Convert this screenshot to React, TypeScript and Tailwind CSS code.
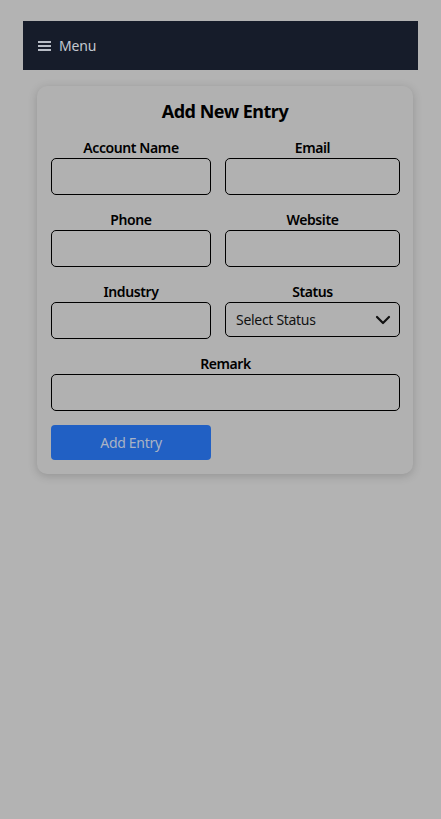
import { useState } from 'react'

const FONT = { fontFamily: '"Noto Sans", "Open Sans", sans-serif' }

function Field({ label, className = '' }: { label: string; className?: string }) {
  return (
    <div className={`flex flex-col ${className}`}>
      <label className="h-5 text-center text-[14px] font-semibold leading-5 tracking-[-0.4px] text-black">{label}</label>
      <input className="h-[37px] w-full rounded-[5px] border border-black bg-transparent px-2 text-[14px] outline-none" />
    </div>
  )
}

export default function App() {
  const [status, setStatus] = useState('')

  return (
    <div className="min-h-screen bg-[#b3b3b3] pt-[21px]" style={FONT}>
      {/* Nav */}
      <div className="mx-[23px] flex h-[49px] items-center gap-2 bg-[#161c2a] px-[15px] text-[14px] tracking-[-0.2px] text-[#c3c8d0]">
        <svg width="13" height="12" viewBox="0 0 13 12" className="text-[#b8bdc6]">
          <rect x="0" y="1" width="13" height="2" fill="currentColor" />
          <rect x="0" y="5" width="13" height="2" fill="currentColor" />
          <rect x="0" y="9" width="13" height="2" fill="currentColor" />
        </svg>
        <span>Menu</span>
      </div>

      {/* Card */}
      <div className="mx-[37px] mt-[16px] w-[376px] rounded-[10px] bg-[#b1b1b1] px-[14px] pb-[14px] pt-[11px] shadow-[0_2px_10px_rgba(0,0,0,0.18)]">
        <h2 className="text-center text-[18px] font-bold leading-7 tracking-[-0.5px] text-black">Add New Entry</h2>

        <div className="mt-[13px] grid grid-cols-[160px_175px] gap-x-[14px] gap-y-[15px]">
          <Field label="Account Name" />
          <Field label="Email" />
          <Field label="Phone" />
          <Field label="Website" />
          <Field label="Industry" />
          <div className="flex flex-col">
            <label className="h-5 text-center text-[14px] font-semibold leading-5 tracking-[-0.4px] text-black">Status</label>
            <div className="relative h-[35px]">
              <select
                value={status}
                onChange={(e) => setStatus(e.target.value)}
                className="h-full w-full appearance-none rounded-[5px] border border-black bg-transparent pl-[10px] text-[14px] tracking-[-0.3px] text-[#111] outline-none"
              >
                <option value="">Select Status</option>
                <option value="active">Active</option>
                <option value="inactive">Inactive</option>
              </select>
              <svg
                width="16"
                height="10"
                viewBox="0 0 16 10"
                className="pointer-events-none absolute right-[9px] top-[13px]"
              >
                <path d="M2 2 L8 8 L14 2" fill="none" stroke="#111" strokeWidth="2.2" strokeLinecap="round" strokeLinejoin="round" />
              </svg>
            </div>
          </div>
          <Field label="Remark" className="col-span-2" />
        </div>

        <button className="mt-[14px] h-[35px] w-[160px] rounded-[4px] bg-[#2160c4] text-[14px] tracking-[-0.3px] text-[#a9b3c4]">
          Add Entry
        </button>
      </div>
    </div>
  )
}
